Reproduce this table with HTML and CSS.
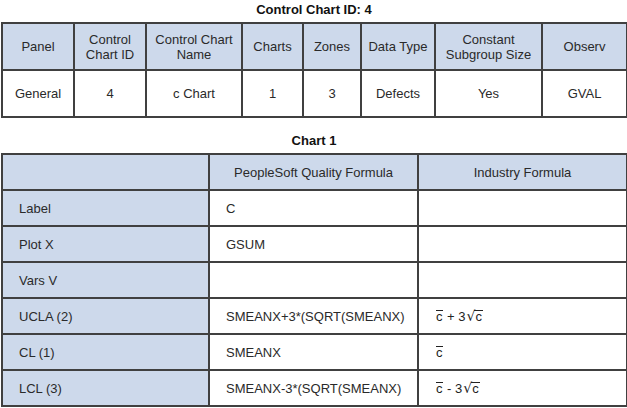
FILE: index.html
```html
<!DOCTYPE html>
<html>
<head>
<meta charset="utf-8">
<link rel="stylesheet" href="styles.css">
</head>
<body>
<div class="page">
  <div class="caption cap1">Control Chart ID: 4</div>
  <table class="grid t1">
    <colgroup>
      <col class="c72"><col class="c72"><col class="c96"><col class="c61"><col class="c58"><col class="c74"><col class="c107"><col class="c85">
    </colgroup>
    <tr class="head">
      <td>Panel</td>
      <td>Control<br>Chart ID</td>
      <td>Control Chart<br>Name</td>
      <td>Charts</td>
      <td>Zones</td>
      <td>Data Type</td>
      <td>Constant<br>Subgroup Size</td>
      <td>Observ</td>
    </tr>
    <tr class="body">
      <td>General</td>
      <td>4</td>
      <td>c Chart</td>
      <td>1</td>
      <td>3</td>
      <td>Defects</td>
      <td>Yes</td>
      <td>GVAL</td>
    </tr>
  </table>
  <div class="caption cap2">Chart 1</div>
  <table class="grid t2">
    <colgroup>
      <col class="w207"><col class="w209"><col class="w209">
    </colgroup>
    <tr class="head">
      <td class="lab"></td>
      <td class="ctr">PeopleSoft Quality Formula</td>
      <td class="ctr">Industry Formula</td>
    </tr>
    <tr><td class="lab">Label</td><td>C</td><td></td></tr>
    <tr><td class="lab">Plot X</td><td>GSUM</td><td></td></tr>
    <tr><td class="lab">Vars V</td><td></td><td></td></tr>
    <tr class="tall"><td class="lab">UCLA (2)</td><td>SMEANX+3*(SQRT(SMEANX)</td><td><span class="f"><span class="ob">c</span> + 3<span class="rt">√</span><span class="rad">c</span></span></td></tr>
    <tr><td class="lab">CL (1)</td><td>SMEANX</td><td><span class="f"><span class="ob">c</span></span></td></tr>
    <tr class="tall"><td class="lab">LCL (3)</td><td>SMEANX-3*(SQRT(SMEANX)</td><td><span class="f"><span class="ob">c</span> - 3<span class="rt">√</span><span class="rad">c</span></span></td></tr>
  </table>
</div>
</body>
</html>
```

FILE: styles.css
```css
html, body {
  margin: 0;
  padding: 0;
  background: #ffffff;
}
body {
  font-family: "Liberation Sans", Arial, sans-serif;
  font-size: 13px;
  color: #2a2a2a;
}
.page {
  width: 627px;
  padding-left: 1px;
  box-sizing: border-box;
}
.caption {
  font-weight: bold;
  text-align: center;
  font-size: 13px;
  color: #111;
}
.cap1 {
  height: 22px;
  line-height: 20px;
}
.cap2 {
  height: 35px;
  line-height: 46px;
}
.grid {
  border-collapse: collapse;
  table-layout: fixed;
  width: 625px;
}
.grid td {
  border: 2px solid #404040;
  padding: 0;
  line-height: 15px;
}
.t1 td {
  text-align: center;
  height: 45px;
}
.t1 .head td {
  background: #cdd9eb;
}
.c72 { width: 72px; }
.c96 { width: 96px; }
.c61 { width: 61px; }
.c58 { width: 58px; }
.c74 { width: 74px; }
.c107 { width: 107px; }
.c85 { width: 85px; }
.w207 { width: 207px; }
.w209 { width: 209px; }
.t2 td {
  height: 34px;
  padding-left: 16px;
  text-align: left;
}
.t2 tr.tall td {
  height: 34px;
}
.t2 .head td {
  background: #cdd9eb;
}
.t2 td.ctr {
  text-align: center;
  padding-left: 0;
}
.t2 td.lab {
  background: #cdd9eb;
}
.f {
  font-family: "Liberation Sans", Arial, sans-serif;
  font-size: 13px;
  color: #222;
  display: inline-flex;
  align-items: baseline;
  white-space: pre;
}
.ob {
  display: inline-block;
  border-top: 1px solid #222;
  line-height: 10px;
  padding-top: 1px;
  margin: 0 1px;
}
.rt {
  font-family: "DejaVu Sans", sans-serif;
  font-size: 14px;
  margin-left: 1px;
}
.rad {
  display: inline-block;
  border-top: 1px solid #222;
  line-height: 11px;
  padding: 0 1px;
  margin-left: -1px;
}
```
